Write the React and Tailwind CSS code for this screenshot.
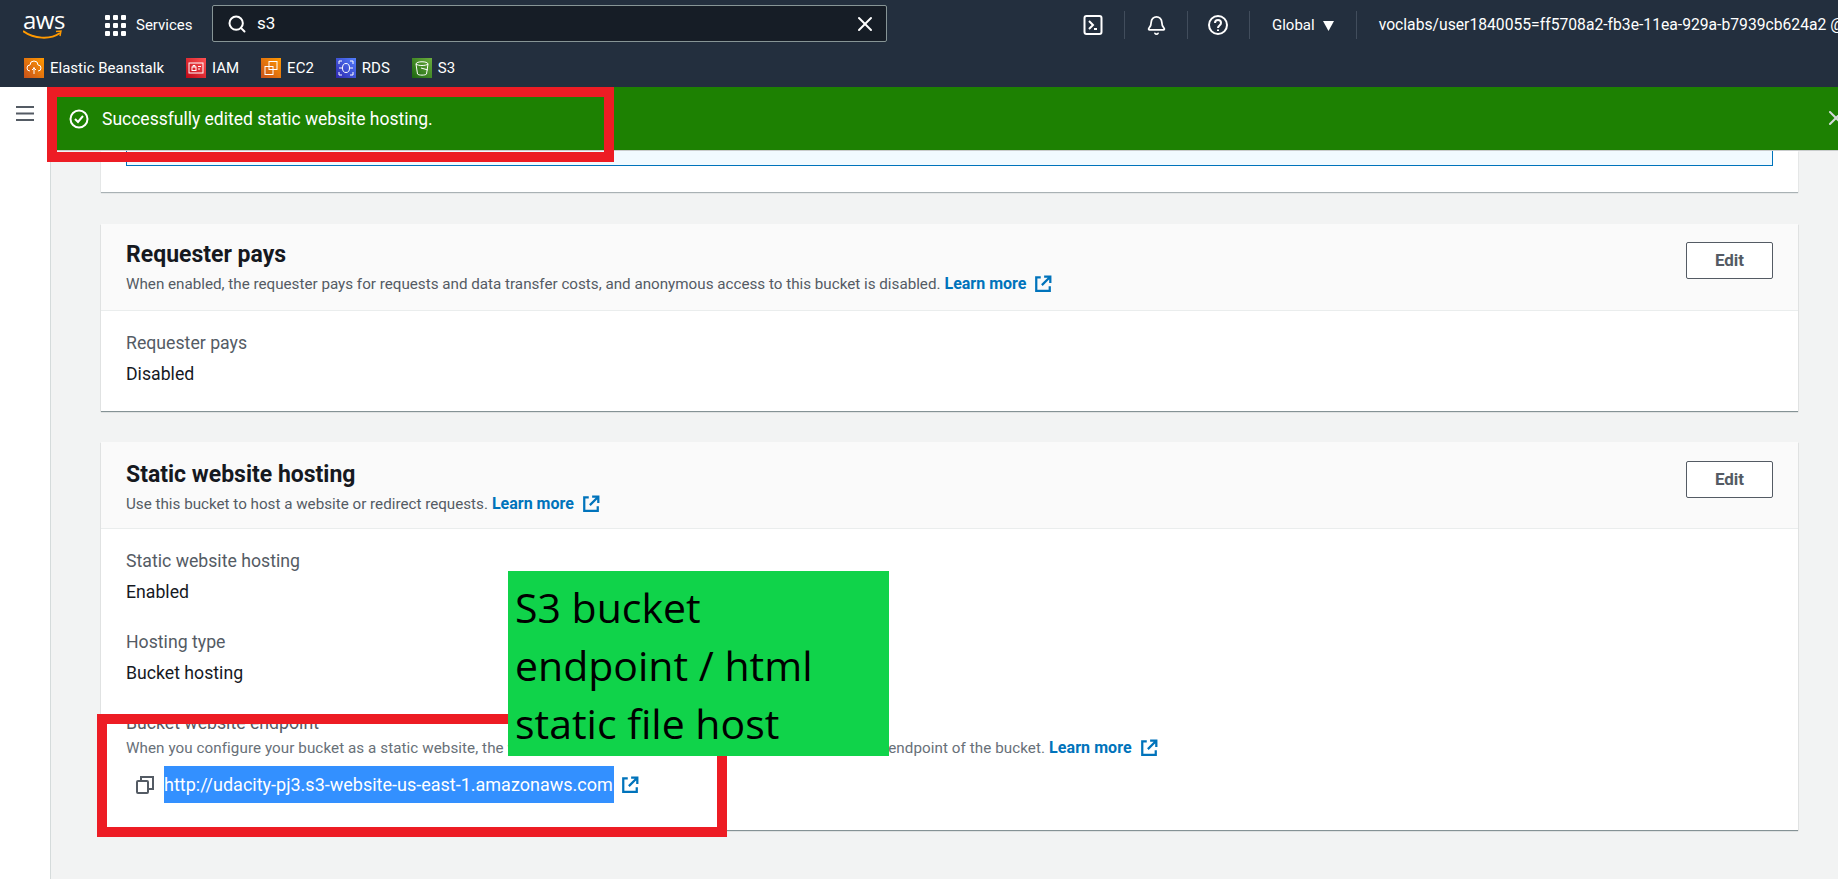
import React from "react";
import { Search, X, Bell } from "lucide-react";

const Ext = ({ className = "" }) => (
  <svg viewBox="0 0 16 16" fill="none" stroke="#0073bb" strokeWidth="2" className={className}>
    <path d="M6 2H2v12h12v-4" />
    <path d="M9 1.500h5.500V7M14 2 7 9" />
  </svg>
);

const Fav = ({ from, to, children, label }) => (
  <div className="flex items-center gap-[6px]">
    <div className="w-5 h-5 flex items-center justify-center" style={{ background: `linear-gradient(45deg, ${from}, ${to})` }}>
      <svg viewBox="0 0 20 20" fill="none" stroke="#fff" strokeWidth="1" className="w-5 h-5">{children}</svg>
    </div>
    <span className="text-[15px] text-white leading-5">{label}</span>
  </div>
);

const Divider = () => <div className="w-px h-7 bg-[#414d5c]" />;

const CardHead = ({ title, children, textTop = "mt-[17px]", btnTop = "mt-[18px]" }) => (
  <div className="h-[87px] bg-[#fafafa] border-b border-[#eaeded] pl-[25px] pr-[25px] flex justify-between">
    <div>
      <h2 className={`text-[23px] leading-7 font-bold text-[#16191f] ${textTop}`}>{title}</h2>
      <p className="text-[15.200px] leading-5 text-[#545b64] mt-[5px] flex items-center">{children}</p>
    </div>
    <button className={`${btnTop} w-[87px] h-[37px] border border-[#545b64] rounded-[2px] bg-white text-[#545b64] text-[17px] font-bold`}>Edit</button>
  </div>
);

const Learn = () => (
  <>
    <span className="ml-[4px] font-bold text-[16px] text-[#0073bb]">Learn more</span>
    <Ext className="w-[18px] h-[18px] ml-[8px]" />
  </>
);

const Field = ({ label, value, className = "" }) => (
  <div className={className}>
    <div className="text-[17.700px] leading-6 text-[#545b64]">{label}</div>
    <div className="text-[17.700px] leading-6 text-[#16191f] mt-[7px]">{value}</div>
  </div>
);

export default function App() {
  return (
    <div className="relative w-[1838px] h-[879px] overflow-hidden bg-[#f2f3f3] font-['Roboto',sans-serif]">
      <header className="h-[87px] bg-[#232f3e] flex flex-col">
        <div className="h-[50px] flex items-center pl-[23px] whitespace-nowrap overflow-hidden">
          <div className="relative w-[40px] h-[30px] mr-[20px] shrink-0">
            <span className="block text-white text-[24px] leading-[24px] font-['Open_Sans',sans-serif] tracking-[-0.5px] -mt-[2px]">aws</span>
            <svg viewBox="0 0 40 10" className="absolute left-0 top-[20px] w-[40px] h-[10px]" fill="none" stroke="#ff9900" strokeWidth="2">
              <path d="M0 1c11 8 27 9 37 2" />
              <path d="M33 1.500l5-.5-1 5" strokeWidth="1.400" />
            </svg>
          </div>
          <Divider />
          <div className="grid grid-cols-3 gap-[3px] ml-[22px] w-[21px] shrink-0">
            {Array.from({ length: 9 }).map((_, i) => (
              <div key={i} className="w-[5px] h-[5px] bg-white rounded-[1px]" />
            ))}
          </div>
          <span className="ml-[10px] text-[15px] text-white w-[56px] shrink-0">Services</span>
          <div className="ml-[20px] w-[675px] shrink-0 h-[37px] bg-[#161d26] border border-[#879596] rounded-[2px] flex items-center pl-[14px] pr-[9px] -mt-[3px]">
            <Search className="w-[20px] h-[20px] text-white" strokeWidth={2.4} />
            <span className="ml-[10px] text-[17px] text-white flex-1">s3</span>
            <X className="w-[24px] h-[24px] text-white" strokeWidth={2} />
          </div>
          <svg viewBox="0 0 20 20" fill="none" stroke="#fff" strokeWidth="2" className="ml-[196px] w-[20px] h-[20px] shrink-0">
            <rect x="1.500" y="1" width="17" height="18" rx="2" />
            <path d="M6 6l4 4-4 4M11 14h3" />
          </svg>
          <div className="ml-[21px] shrink-0"><Divider /></div>
          <Bell className="ml-[21px] w-[21px] h-[21px] text-white shrink-0" strokeWidth={2} />
          <div className="ml-[20px] shrink-0"><Divider /></div>
          <svg viewBox="0 0 20 20" fill="none" stroke="#fff" strokeWidth="2" className="ml-[20px] w-[20px] h-[20px] shrink-0">
            <circle cx="10" cy="10" r="9" />
            <path d="M7 8c0-4 6-4 6 0 0 2.500-3 2.500-3 5M10 14.500v1.500" />
          </svg>
          <div className="ml-[21px] shrink-0"><Divider /></div>
          <span className="ml-[22px] text-[15px] text-white shrink-0">Global</span>
          <svg viewBox="0 0 10 10" className="ml-[8px] w-[11px] h-[11px] shrink-0" fill="#fff"><path d="M0 1h10L5 10z" /></svg>
          <div className="ml-[22px] shrink-0"><Divider /></div>
          <span className="ml-[22px] text-[15.700px] text-white shrink-0">voclabs/user1840055=ff5708a2-fb3e-11ea-929a-b7939cb624a2 @ 0000</span>
        </div>
        <div className="h-[37px] flex items-start pl-[24px] pt-[8px] gap-[22px]">
          <Fav from="#c8511b" to="#ff9900" label="Elastic Beanstalk">
            <path d="M6 13a3 3 0 0 1 0-6 4 4 0 0 1 8 0 3 3 0 0 1 0 6M10 9v7M8 12l2-2 2 2" />
          </Fav>
          <Fav from="#bd0816" to="#ff5252" label="IAM">
            <rect x="3" y="5" width="14" height="10" />
            <rect x="6" y="9" width="4" height="3.500" />
            <path d="M7 9V7.500h2V9M12 8.500h3M12 11h2" />
          </Fav>
          <Fav from="#c8511b" to="#ff9900" label="EC2">
            <rect x="8" y="3.500" width="8" height="8" />
            <rect x="4" y="8.500" width="8" height="8" />
          </Fav>
          <Fav from="#2e27ad" to="#527fff" label="RDS">
            <ellipse cx="10" cy="10" rx="3.500" ry="4.500" />
            <path d="M3 6V3h3M14 3h3v3M3 14v3h3M14 17h3v-3M3 10h3M14 10h3" />
          </Fav>
          <Fav from="#1b660f" to="#6cae3e" label="S3">
            <path d="M4 6c0-3 12-3 12 0l-1.500 10c-1 1.500-8 1.500-9 0z" />
            <path d="M4 6c2 2 10 2 12 0M9 10l7 2" />
          </Fav>
        </div>
      </header>

      <div className="flex h-[792px]">
        <aside className="w-[51px] shrink-0 bg-white border-r border-[#d5dbdb] pl-[16px] pt-[19px]">
          <svg viewBox="0 0 18 15" className="w-[18px] h-[15px]" fill="none" stroke="#545b64" strokeWidth="2">
            <path d="M0 1h18M0 7.500h18M0 14h18" />
          </svg>
        </aside>
        <main className="flex-1 min-w-0">
          <div className="relative z-10 -ml-[4px] h-[64px] bg-[#1d8102] border-b border-[#c9cccc] flex items-start pl-[22px] pt-[20px] whitespace-nowrap">
            <svg viewBox="0 0 20 20" fill="none" stroke="#fff" strokeWidth="2" className="w-[20px] h-[20px] mt-[2px]">
              <circle cx="10" cy="10" r="8.500" />
              <path d="M6 10l3 3 5-6" />
            </svg>
            <span className="ml-[13px] text-[17.500px] leading-[24px] text-white">Successfully edited static website hosting.</span>
            <X className="absolute right-[-10px] top-[19px] w-[24px] h-[24px] text-[#d5dbdb]" strokeWidth={2} />
          </div>
          <div className="ml-[50px] w-[1697px]">
            <section className="h-[41px] bg-white shadow-[0_1px_1px_rgba(0,28,36,0.3)] pl-[25px] pr-[25px]">
              <div className="h-[15px] bg-[#f1faff] border-x border-b border-[#0073bb]" />
            </section>
            <section className="mt-[32px] h-[187px] bg-white shadow-[0_1px_1px_rgba(0,28,36,0.45)]">
              <CardHead title="Requester pays">
                When enabled, the requester pays for requests and data transfer costs, and anonymous access to this bucket is disabled.
                <Learn />
              </CardHead>
              <div className="pl-[25px] pt-[20px]">
                <Field label="Requester pays" value="Disabled" />
              </div>
            </section>
            <section className="mt-[31px] h-[388px] bg-white shadow-[0_1px_1px_rgba(0,28,36,0.45)]">
              <CardHead title="Static website hosting" textTop="mt-[19px]" btnTop="mt-[19px]">
                Use this bucket to host a website or redirect requests.
                <Learn />
              </CardHead>
              <div className="pl-[25px] pt-[20px]">
                <Field label="Static website hosting" value="Enabled" />
                <Field label="Hosting type" value="Bucket hosting" className="mt-[26px]" />
                <div className="mt-[26px] text-[17.700px] leading-6 text-[#545b64]">Bucket website endpoint</div>
                <p className="mt-[3px] text-[15.200px] tracking-[0.07px] leading-5 text-[#687078] flex items-center whitespace-nowrap">
                  When you configure your bucket as a static website, the website is available at the AWS Region-specific website endpoint of the bucket.
                  <Learn />
                </p>
                <div className="mt-[8px] ml-[10px] flex items-center h-[37px]">
                  <svg viewBox="0 0 18 18" fill="none" stroke="#545b64" strokeWidth="2" className="w-[18px] h-[18px]">
                    <rect x="1" y="5" width="11" height="12" rx="1" />
                    <path d="M5 5V1h12v12h-5" />
                  </svg>
                  <span className="ml-[10px] h-[37px] w-[450px] bg-[#3390ff] text-white text-[18px] leading-[37px] whitespace-nowrap">http://udacity-pj3.s3-website-us-east-1.amazonaws.com</span>
                  <Ext className="w-[18px] h-[18px] ml-[7px]" />
                </div>
              </div>
            </section>
          </div>
        </main>
      </div>

      {/* annotations drawn on top of the screenshot */}
      <div className="absolute z-20 left-[47px] top-[87px] w-[567px] h-[75px] border-[10px] border-[#ed1c24]" />
      <div className="absolute z-20 left-[97px] top-[714px] w-[630px] h-[123px] border-[10px] border-[#ed1c24]" />
      <div className="absolute z-30 left-[508px] top-[571px] w-[381px] h-[185px] bg-[#10d34a] text-black text-[41px] leading-[58px] pl-[7px] pt-[7px] font-['Open_Sans',sans-serif]">
        S3 bucket<br />endpoint / html<br />static file host
      </div>
    </div>
  );
}
